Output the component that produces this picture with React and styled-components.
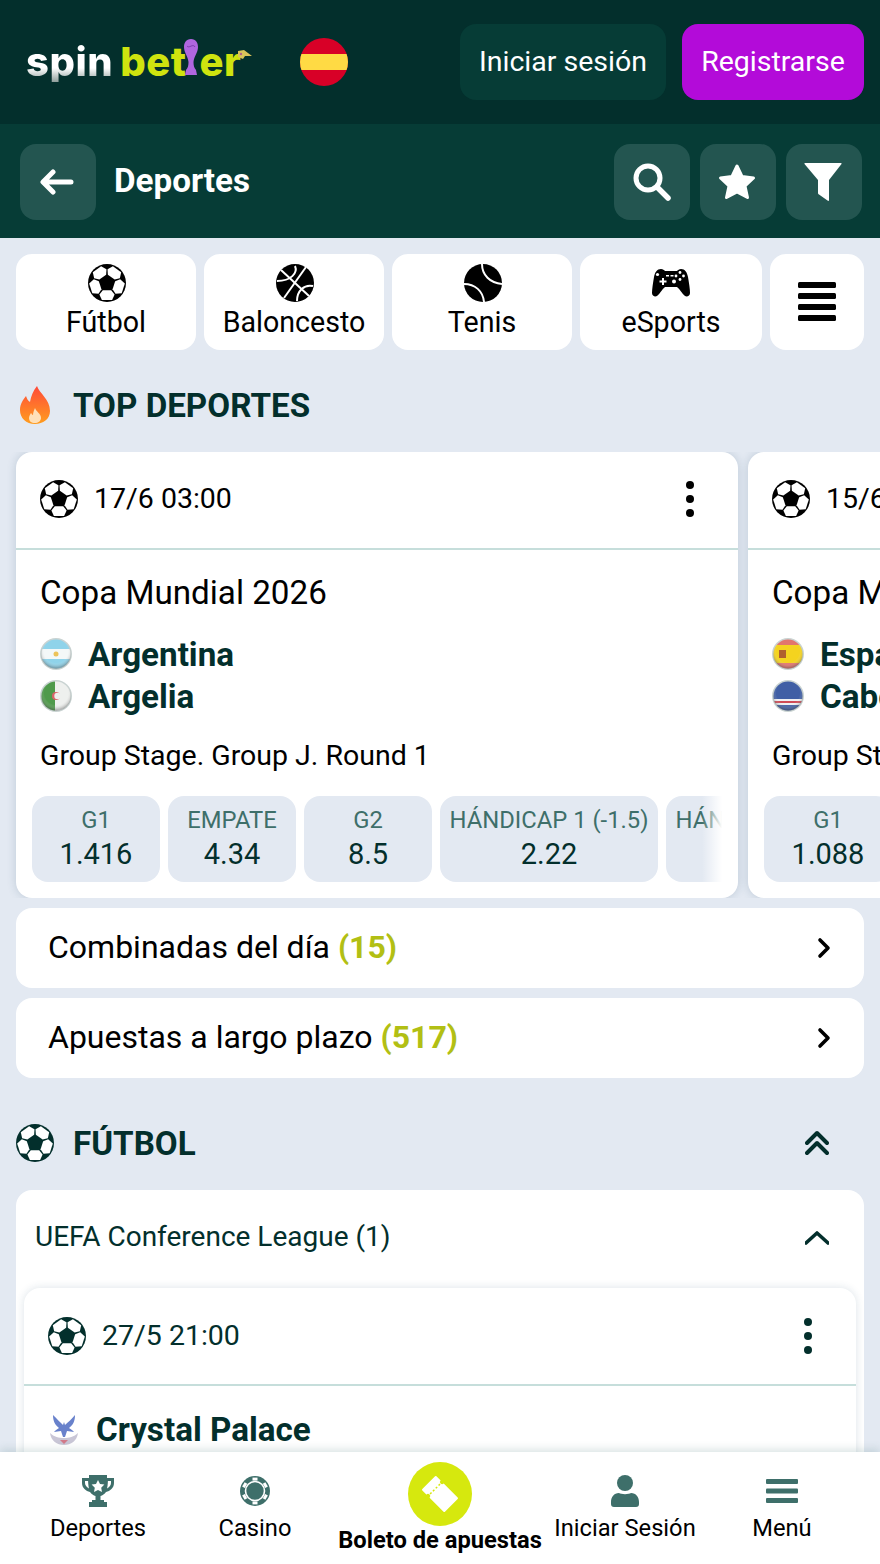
import React from "react";
import styled, { createGlobalStyle } from "styled-components";

const INK = "#032f2c";
const MUTED = "#3e6f6a";

const Global = createGlobalStyle`
  html, body { margin: 0; padding: 0; overflow: hidden; background: #e3e9f2; }
  * { box-sizing: border-box; }
  body { font-family: Roboto, "Liberation Sans", sans-serif; }
`;

const Page = styled.div`
  position: relative;
  width: 880px;
  height: 1564px;
  overflow: hidden;
  background: #e3e9f2;
`;
const TopBar = styled.header`
  height: 124px;
  background: ${INK};
  display: flex;
  align-items: center;
  padding: 0 16px 0 26px;
`;
const Logo = styled.div`
  width: 274px;
  height: 50px;
  padding-bottom: 5px;
  display: flex;
  align-items: flex-end;
  font-family: Inter, sans-serif;
  font-weight: 800;
  font-size: 40px;
  line-height: 40px;
  letter-spacing: 0.5px;
  color: #cfe30f;
`;
const LogoSpin = styled.span`
  margin-right: 7px;
  background: linear-gradient(#fff 65%, #8f9e9b);
  -webkit-background-clip: text;
  background-clip: text;
  color: transparent;
`;
const FlagBig = styled.svg`
  width: 48px;
  height: 48px;
  flex: none;
`;
const TopActions = styled.div`
  margin-left: auto;
  display: flex;
  gap: 16px;
`;
const TopButton = styled.button`
  height: 76px;
  width: ${(p) => p.$w}px;
  border: 0;
  border-radius: 16px;
  background: ${(p) => p.$bg};
  color: #fff;
  font: 400 28.5px Roboto, sans-serif;
  padding: 0 0 2px;
`;
const SubBar = styled.div`
  height: 114px;
  background: #063c36;
  display: flex;
  align-items: center;
  padding: 2px 18px 0 20px;
`;
const SquareButton = styled.button`
  width: 76px;
  height: 76px;
  border: 0;
  padding: 0;
  border-radius: 16px;
  background: #235550;
  display: flex;
  align-items: center;
  justify-content: center;
  color: #fff;
  flex: none;
`;
const SubTitle = styled.h1`
  margin: 0 0 4px 18px;
  font-size: 33.2px;
  font-weight: 700;
  color: #fff;
`;
const SubActions = styled.div`
  margin-left: auto;
  display: flex;
  gap: 10px;
`;
const SportTabs = styled.nav`
  display: grid;
  grid-template-columns: 180px 180px 180px 182px 94px;
  gap: 8px;
  padding: 16px 16px 0;
`;
const SportTab = styled.div`
  height: 96px;
  background: #fff;
  border-radius: 16px;
  display: flex;
  flex-direction: column;
  align-items: center;
  padding-top: 10px;
  color: #000;
  font-size: 28.6px;
  line-height: 36px;
`;
const SportIcon = styled.div`
  height: 38px;
  display: flex;
  align-items: center;
  justify-content: center;
  margin: 0 0 2px 2px;
`;
const MoreTab = styled(SportTab)`
  justify-content: center;
  padding: 0 0 2px;
`;
const SectionHead = styled.div`
  display: flex;
  align-items: center;
  height: ${(p) => p.$h}px;
  padding: ${(p) => p.$pad};
  font-size: 33.2px;
  font-weight: 700;
  color: ${INK};
`;
const SectionIcon = styled.div`
  width: ${(p) => p.$w}px;
  display: flex;
  align-items: center;
  flex: none;
`;
const Carousel = styled.div`
  display: flex;
  gap: 10px;
  padding: 0 16px;
  height: 446px;
  overflow: hidden;
`;
const Card = styled.article`
  flex: none;
  width: 722px;
  height: 446px;
  background: #fff;
  border-radius: 16px;
  box-shadow: 0 0 10px rgba(40, 80, 110, 0.2);
  overflow: hidden;
`;
const CardHead = styled.div`
  height: 98px;
  border-bottom: 2px solid #c6dedb;
  display: flex;
  align-items: center;
  padding: ${(p) => (p.$inner ? "0 24px" : "0 24px 2px")};
  gap: 16px;
  font-size: 28.5px;
  color: ${(p) => (p.$inner ? INK : "#000")};
`;
const DateText = styled.span`
  margin-bottom: 2px;
`;
const Kebab = styled.div`
  margin-left: auto;
  margin-right: 20px;
  display: flex;
  flex-direction: column;
  gap: 6px;
`;
const Dot = styled.i`
  display: block;
  width: 8px;
  height: 8px;
  border-radius: 50%;
  background: ${(p) => p.$color || "#000"};
`;
const League = styled.div`
  padding: 23px 24px 0;
  font-size: 33.2px;
  line-height: 40px;
  color: #000;
  white-space: nowrap;
`;
const Teams = styled.div`
  padding: 20px 24px 0;
`;
const Team = styled.div`
  display: flex;
  align-items: center;
  gap: 16px;
  height: 42px;
  font-size: 33.2px;
  font-weight: 700;
  color: ${INK};
  white-space: nowrap;
`;
const Stage = styled.div`
  padding: 21px 24px 0;
  height: 58px;
  font-size: 28.5px;
  line-height: 36px;
  color: #000;
  white-space: nowrap;
`;
const OddsRow = styled.div`
  position: relative;
  margin-top: 21px;
  padding-left: 16px;
  width: 706px;
  display: flex;
  gap: 8px;
  overflow: hidden;
`;
const Odd = styled.div`
  flex: none;
  width: ${(p) => p.$w}px;
  height: 86px;
  border-radius: 16px;
  background: #e3e9f2;
  display: flex;
  flex-direction: column;
  align-items: center;
  padding-top: 9px;
  white-space: nowrap;
  overflow: hidden;
`;
const OddLabel = styled.span`
  font-size: 23.8px;
  line-height: 31px;
  color: ${MUTED};
`;
const OddValue = styled.span`
  font-size: 29px;
  line-height: 36px;
  color: ${INK};
`;
const Fade = styled.div`
  position: absolute;
  top: 0;
  right: 0;
  width: 20px;
  height: 86px;
  background: linear-gradient(90deg, rgba(255, 255, 255, 0), #fff);
`;
const LinkRow = styled.div`
  margin: 10px 16px 0;
  height: 80px;
  background: #fff;
  border-radius: 16px;
  display: flex;
  align-items: center;
  justify-content: space-between;
  padding: 0 28px 0 32px;
  font-size: 32px;
  color: #000;
`;
const LinkText = styled.span`
  margin-bottom: 2px;
`;
const Count = styled.b`
  font-weight: 700;
  color: #b2bf14;
`;
const EndIcon = styled.div`
  margin-left: auto;
  margin-right: 51px;
  display: flex;
`;
const Accordion = styled.section`
  margin: 0 16px;
  background: #fff;
  border-radius: 16px 16px 0 0;
  height: 400px;
  padding: 0 8px;
`;
const AccordionHead = styled.div`
  height: 98px;
  display: flex;
  align-items: center;
  justify-content: space-between;
  padding: 0 27px 2px 11px;
  font-size: 28px;
  color: ${INK};
`;
const AccordionTitle = styled.span`
  margin-bottom: 4px;
`;
const InnerCard = styled.article`
  background: #fff;
  border-radius: 16px;
  box-shadow: 0 0 8px rgba(40, 80, 110, 0.16);
  height: 300px;
`;
const CrestTeam = styled(Team)`
  padding: 22px 24px 0;
  height: 64px;
`;
const BottomNav = styled.nav`
  position: absolute;
  left: 0;
  right: 0;
  bottom: 0;
  height: 112px;
  background: #fff;
  box-shadow: 0 -3px 8px rgba(60, 110, 110, 0.18);
  display: grid;
  grid-template-columns: 196px 118px 1fr 118px 196px;
`;
const NavItem = styled.div`
  display: flex;
  flex-direction: column;
  align-items: center;
  font-size: 23.7px;
  line-height: 30px;
  color: #000;
  white-space: nowrap;
  padding-top: 23px;
`;
const NavIcon = styled.div`
  height: 32px;
  margin-bottom: 6px;
  display: flex;
  align-items: center;
`;
const NavCenter = styled(NavItem)`
  padding-top: 10px;
  font-weight: 700;
  line-height: 28px;
`;
const TicketCircle = styled.div`
  width: 64px;
  height: 64px;
  border-radius: 50%;
  background: #d6e80e;
  display: flex;
  align-items: center;
  justify-content: center;
`;

const pt = (a, r, t) => {
  const c = Math.cos(a), s = Math.sin(a);
  return `${(19 + 19 * (r * c - t * s)).toFixed(2)},${(19 + 19 * (r * s + t * c)).toFixed(2)}`;
};
const PATCH = [[0.38, -0.22], [0.38, 0.22], [0.6, 0.4], [0.9, 0.27], [0.9, -0.27], [0.6, -0.4]];
const Ball = ({ color = "#000" }) => (
  <svg width="38" height="38" viewBox="0 0 38 38" style={{ flex: "none" }}>
    <circle cx="19" cy="19" r="19" fill={color} />
    {[90, 162, 234, 306, 18].map((d) => (
      <polygon key={d} fill="#fff" points={PATCH.map(([r, t]) => pt((d * Math.PI) / 180, r, t)).join(" ")} />
    ))}
  </svg>
);

const Basket = () => (
  <svg width="38" height="38" viewBox="0 0 38 38">
    <circle cx="19" cy="19" r="19" fill="#000" />
    <g fill="none" stroke="#fff" strokeWidth="2">
      <path d="M5 6 L33 32" />
      <path d="M30 3 L8 34" />
      <path d="M19 2 C22 9 15 17 1 17" />
      <path d="M37 22 C28 20 21 27 21 37" />
    </g>
  </svg>
);
const Tennis = () => (
  <svg width="38" height="38" viewBox="0 0 38 38">
    <circle cx="19" cy="19" r="19" fill="#000" />
    <g fill="none" stroke="#fff" strokeWidth="2">
      <path d="M18 0 C18 11 26 19 38 20" />
      <path d="M0 20 C11 20 19 27 20 38" />
    </g>
  </svg>
);
const Pad = () => (
  <svg width="38" height="28" viewBox="0 0 38 28" style={{ marginLeft: "-2px" }}>
    <path d="M9 0 C11 0 12 1 13 2 H25 C26 1 27 0 29 0 C33 0 35 3 36 8 C37 14 38 20 38 24 C38 27 35 28 33 27 C30 25 28 20 25 18 H13 C10 20 8 25 5 27 C3 28 0 27 0 24 C0 20 1 14 2 8 C3 3 5 0 9 0 Z" fill="#000" />
    <g fill="#fff">
      <rect x="10" y="9" width="2" height="7" />
      <rect x="7.5" y="11.5" width="7" height="2" />
      <circle cx="5.5" cy="5.5" r="1.6" />
      <circle cx="24" cy="7" r="1.4" /><circle cx="28" cy="3.5" r="1.4" /><circle cx="31.5" cy="7" r="1.4" /><circle cx="28" cy="10.5" r="1.4" />
      <circle cx="22" cy="12.5" r="2" />
      <rect x="14" y="6" width="3" height="1.5" /><rect x="18.5" y="6" width="3" height="1.5" />
    </g>
  </svg>
);
const Bars = ({ w, h, n, gap, color, r = 1.5 }) => (
  <svg width={w} height={n * h + (n - 1) * gap} viewBox={`0 0 ${w} ${n * h + (n - 1) * gap}`}>
    {Array.from({ length: n }, (_, i) => (
      <rect key={i} y={i * (h + gap)} width={w} height={h} rx={r} fill={color} />
    ))}
  </svg>
);
const Arrow = () => (
  <svg width="34" height="26" viewBox="0 0 34 26" fill="none" stroke="#fff" strokeWidth="5" strokeLinecap="round" strokeLinejoin="round" style={{ marginLeft: "-3px" }}>
    <path d="M31 13 H4 M13 3 L3 13 L13 23" />
  </svg>
);
const Search = () => (
  <svg width="38" height="38" viewBox="0 0 38 38" fill="none" stroke="#fff" strokeLinecap="round">
    <circle cx="15" cy="15" r="12" strokeWidth="5" />
    <path d="M25 25 L35 35" strokeWidth="5.5" />
  </svg>
);
const Star = () => (
  <svg width="38" height="38" viewBox="0 0 38 38" style={{ marginLeft: "-2px" }}>
    <path d="M19 3 L24 13.5 L35.5 15 L27 23 L29.5 34.5 L19 29 L8.5 34.5 L11 23 L2.5 15 L14 13.5 Z" fill="#fff" stroke="#fff" strokeWidth="3" strokeLinejoin="round" />
  </svg>
);
const Funnel = () => (
  <svg width="38" height="38" viewBox="0 0 38 38" style={{ marginLeft: "-2px" }}>
    <path d="M1 0 H37 Q38 0 37.5 1 L25 17 V37 Q25 38.5 23.5 37.5 L15 31.5 Q14 31 14 30 V17 L0.5 1 Q0 0 1 0 Z" fill="#fff" />
  </svg>
);
const Flame = () => (
  <svg width="30" height="38" viewBox="0 0 30 38">
    <defs>
      <linearGradient id="fl" x1="0" y1="0" x2="0" y2="1">
        <stop offset="0" stopColor="#ff4a3a" />
        <stop offset="1" stopColor="#ff9d1e" />
      </linearGradient>
    </defs>
    <path d="M17 0 C19 7 30 13 30 25 C30 33 23 38 15 38 C6 38 0 32 0 24 C0 18 3 14 6 10 C7 13 8 15 10 16 C11 10 13 5 17 0 Z" fill="url(#fl)" />
    <path d="M15 22 C16 26 21 27 21 32 C21 35 18 37 15 37 C11 37 9 35 9 32 C9 30 10 29 11 27 C12 28 12 29 13 29 C13 27 14 24 15 22 Z" fill="#ffe0b8" />
  </svg>
);
const Chevron = ({ dir, color = "#000" }) => (
  <svg width="24" height="24" viewBox="0 0 24 24" fill="none" stroke={color} strokeWidth="3.6" strokeLinecap="round" strokeLinejoin="round">
    <path d={dir === "right" ? "M8 4 L16 12 L8 20" : "M1 17 L12 7 L23 17"} />
  </svg>
);
const DoubleUp = () => (
  <svg width="24" height="26" viewBox="0 0 24 26" fill="none" stroke={INK} strokeWidth="4" strokeLinecap="round" strokeLinejoin="round">
    <path d="M2 13 L12 3 L22 13 M2 23 L12 13 L22 23" />
  </svg>
);

const Gloss = ({ id, children }) => (
  <svg width="32" height="32" viewBox="0 0 32 32" style={{ flex: "none" }}>
    <defs>
      <clipPath id={id}><circle cx="16" cy="16" r="14.5" /></clipPath>
      <radialGradient id={id + "g"} cx="0.5" cy="0.4" r="0.55">
        <stop offset="0.7" stopColor="#fff" stopOpacity="0" />
        <stop offset="1" stopColor="#555" stopOpacity="0.35" />
      </radialGradient>
      <filter id={id + "b"}><feGaussianBlur stdDeviation="0.7" /></filter>
    </defs>
    <circle cx="16" cy="16" r="16" fill="#c9d3d2" />
    <g clipPath={`url(#${id})`} filter={`url(#${id}b)`}>{children}</g>
    <circle cx="16" cy="16" r="15" fill={`url(#${id}g)`} />
  </svg>
);
const FlagAR = () => (
  <Gloss id="ar">
    <rect width="32" height="32" fill="#8fd3ea" /><rect y="11" width="32" height="10" fill="#f4f8f8" />
    <circle cx="16" cy="16" r="2.5" fill="#ecc35a" />
  </Gloss>
);
const FlagDZ = () => (
  <Gloss id="dz">
    <rect width="32" height="32" fill="#eef0ee" /><rect width="15" height="32" fill="#4f9a4c" />
    <circle cx="16" cy="16" r="4" fill="#d9636a" /><circle cx="17.5" cy="16" r="3.2" fill="#eef0ee" />
  </Gloss>
);
const FlagES = () => (
  <Gloss id="es">
    <rect width="32" height="32" fill="#f4d31f" /><rect width="32" height="7" fill="#e2756d" /><rect y="25" width="32" height="7" fill="#e2756d" />
    <rect x="7" y="12" width="7" height="8" fill="#b0602e" />
  </Gloss>
);
const FlagCV = () => (
  <Gloss id="cv">
    <rect width="32" height="32" fill="#3f5fa5" /><rect y="19" width="32" height="6" fill="#eef0f2" /><rect y="21" width="32" height="2" fill="#cf4b56" />
  </Gloss>
);
const Crest = () => (
  <svg width="32" height="32" viewBox="0 0 32 32" style={{ flex: "none" }}>
    <path d="M2 20 C3 28 9 32 16 32 C23 32 29 28 30 20 C26 24 21 25 16 25 C11 25 6 24 2 20 Z" fill="#c9c6d6" />
    <path d="M5 2 C9 6 12 9 15 12 L16 9 L17 12 C20 9 24 6 27 2 C27 8 25 12 21 15 C23 16 25 18 26 19 L19 18 L17 24 H15 L13 18 L6 19 C7 18 9 16 11 15 C7 12 5 8 5 2 Z" fill="#4d6bc2" opacity="0.85" />
    <path d="M12 27 H20 L16 31 Z" fill="#d65a6a" opacity="0.7" />
  </svg>
);
const Trophy = () => (
  <svg width="32" height="32" viewBox="0 0 32 32">
    <path d="M7 0 H25 V3 H32 V8 C32 13 28 16 24 17 C22.5 19 20.5 20.5 18.5 21 V25 H22 V27 H25 V32 H7 V27 H10 V25 H13.5 V21 C11.5 20.5 9.5 19 8 17 C4 16 0 13 0 8 V3 H7 Z M3 6 V8 C3 10.5 5 12.5 7 13.5 C6.5 11.5 6.2 9 6.1 6 Z M29 6 H25.9 C25.8 9 25.5 11.5 25 13.5 C27 12.5 29 10.5 29 8 Z" fill={MUTED} fillRule="evenodd" />
    <path d="M16 5 L18 9 L22.4 9.6 L19.2 12.7 L20 17 L16 15 L12 17 L12.8 12.7 L9.6 9.6 L14 9 Z" fill="#fff" />
  </svg>
);
const Chip = () => (
  <svg width="30" height="32" viewBox="0 0 30 32">
    <circle cx="15" cy="16" r="15" fill={MUTED} />
    <circle cx="15" cy="16" r="9.5" fill="none" stroke="#fff" strokeWidth="1.6" />
    <g fill="#fff">
      {[0, 60, 120, 180, 240, 300].map((a) => (
        <rect key={a} x="12.5" y="2.6" width="5" height="3" transform={`rotate(${a} 15 16)`} />
      ))}
    </g>
  </svg>
);
const User = () => (
  <svg width="28" height="32" viewBox="0 0 28 32">
    <circle cx="14" cy="8" r="8" fill={MUTED} />
    <path d="M8 18 C10 19.5 18 19.5 20 18 C25 18 28 22 28 27 V29 C28 31 27 32 25 32 H3 C1 32 0 31 0 29 V27 C0 22 3 18 8 18 Z" fill={MUTED} />
  </svg>
);
const Ticket = () => (
  <svg width="44" height="44" viewBox="0 0 44 44">
    <g transform="rotate(45 22 22)">
      <rect x="6" y="12" width="32" height="20" rx="1" fill="#fff" />
      <circle cx="15" cy="12" r="2.2" fill="#d6e80e" />
      <circle cx="15" cy="32" r="2.2" fill="#d6e80e" />
      <path d="M15 15 V29" stroke="#d6e80e" strokeWidth="1.5" strokeDasharray="2 2" />
    </g>
  </svg>
);
const Cup = () => (
  <svg width="16" height="36" viewBox="0 0 16 36" style={{ marginBottom: "7px", marginLeft: "-4px", marginRight: "1px", flex: "none" }}>
    <path d="M8 0 C13 0 15 4 15 8 C15 14 11 17 10.5 23 C10.5 26 11 29 13 31 L14 36 H2 L3 31 C5 29 5.5 26 5.5 23 C5 17 1 14 1 8 C1 4 3 0 8 0 Z" fill="#b066e0" />
    <path d="M4 7 C6 10 10 4 12 8" stroke="#7d3fb0" fill="none" strokeWidth="1" />
  </svg>
);
const LogoTag = () => (
  <svg width="14" height="10" viewBox="0 0 14 10" style={{ marginBottom: "22px", marginLeft: "-3px", flex: "none" }}>
    <path d="M0 1 L6 0 L14 6 L7 6 L5 9 L0 7 Z" fill="#d9c25a" />
    <circle cx="3" cy="4" r="1.2" fill="#b0608a" />
  </svg>
);

const odds = [
  ["G1", "1.416", 128], ["EMPATE", "4.34", 128], ["G2", "8.5", 128],
  ["HÁNDICAP 1 (-1.5)", "2.22", 218], ["HÁNDICAP 2 (-1.5)", "1.6", 218],
];

export default function App() {
  return (
    <Page>
      <Global />
      <TopBar>
        <Logo>
          <LogoSpin>spin</LogoSpin>
          <span>bet</span>
          <Cup />
          <span>er</span>
          <LogoTag />
        </Logo>
        <FlagBig viewBox="0 0 48 48">
          <defs><clipPath id="esb"><circle cx="24" cy="24" r="24" /></clipPath></defs>
          <g clipPath="url(#esb)">
            <rect width="48" height="48" fill="#d80027" />
            <rect y="16" width="48" height="16" fill="#ffda44" />
          </g>
        </FlagBig>
        <TopActions>
          <TopButton $w={206} $bg="#063c36">Iniciar sesión</TopButton>
          <TopButton $w={182} $bg="#b30bd9">Registrarse</TopButton>
        </TopActions>
      </TopBar>
      <SubBar>
        <SquareButton><Arrow /></SquareButton>
        <SubTitle>Deportes</SubTitle>
        <SubActions>
          <SquareButton><Search /></SquareButton>
          <SquareButton><Star /></SquareButton>
          <SquareButton><Funnel /></SquareButton>
        </SubActions>
      </SubBar>
      <SportTabs>
        <SportTab><SportIcon><Ball /></SportIcon>Fútbol</SportTab>
        <SportTab><SportIcon><Basket /></SportIcon>Baloncesto</SportTab>
        <SportTab><SportIcon><Tennis /></SportIcon>Tenis</SportTab>
        <SportTab><SportIcon><Pad /></SportIcon>eSports</SportTab>
        <MoreTab><Bars w={38} h={6} n={4} gap={5} color="#000" /></MoreTab>
      </SportTabs>
      <SectionHead $h={102} $pad="8px 0 0 20px">
        <SectionIcon $w={53}><Flame /></SectionIcon>
        <span>TOP DEPORTES</span>
      </SectionHead>
      <Carousel>
        <Card>
          <CardHead><Ball /><DateText>17/6 03:00</DateText><Kebab><Dot /><Dot /><Dot /></Kebab></CardHead>
          <League>Copa Mundial 2026</League>
          <Teams>
            <Team><FlagAR />Argentina</Team>
            <Team><FlagDZ />Argelia</Team>
          </Teams>
          <Stage>Group Stage. Group J. Round 1</Stage>
          <OddsRow>
            {odds.map(([l, v, w]) => (
              <Odd key={l} $w={w}><OddLabel>{l}</OddLabel><OddValue>{v}</OddValue></Odd>
            ))}
            <Fade />
          </OddsRow>
        </Card>
        <Card>
          <CardHead><Ball /><DateText>15/6 18:00</DateText></CardHead>
          <League>Copa Mundial 2026</League>
          <Teams>
            <Team><FlagES />España</Team>
            <Team><FlagCV />Cabo Verde</Team>
          </Teams>
          <Stage>Group Stage. Group H. Round 1</Stage>
          <OddsRow>
            <Odd $w={128}><OddLabel>G1</OddLabel><OddValue>1.088</OddValue></Odd>
          </OddsRow>
        </Card>
      </Carousel>
      <LinkRow><LinkText>Combinadas del día <Count>(15)</Count></LinkText><Chevron dir="right" /></LinkRow>
      <LinkRow><LinkText>Apuestas a largo plazo <Count>(517)</Count></LinkText><Chevron dir="right" /></LinkRow>
      <SectionHead $h={112} $pad="18px 0 0 16px">
        <SectionIcon $w={57}><Ball color={INK} /></SectionIcon>
        <span>FÚTBOL</span>
        <EndIcon><DoubleUp /></EndIcon>
      </SectionHead>
      <Accordion>
        <AccordionHead><AccordionTitle>UEFA Conference League (1)</AccordionTitle><Chevron dir="up" color={INK} /></AccordionHead>
        <InnerCard>
          <CardHead $inner><Ball color={INK} /><DateText>27/5 21:00</DateText><Kebab><Dot $color={INK} /><Dot $color={INK} /><Dot $color={INK} /></Kebab></CardHead>
          <CrestTeam><Crest />Crystal Palace</CrestTeam>
        </InnerCard>
      </Accordion>
      <BottomNav>
        <NavItem><NavIcon><Trophy /></NavIcon>Deportes</NavItem>
        <NavItem><NavIcon><Chip /></NavIcon>Casino</NavItem>
        <NavCenter><TicketCircle><Ticket /></TicketCircle>Boleto de apuestas</NavCenter>
        <NavItem><NavIcon><User /></NavIcon>Iniciar Sesión</NavItem>
        <NavItem><NavIcon><Bars w={32} h={5} n={3} gap={4.5} color={MUTED} r={1} /></NavIcon>Menú</NavItem>
      </BottomNav>
    </Page>
  );
}
